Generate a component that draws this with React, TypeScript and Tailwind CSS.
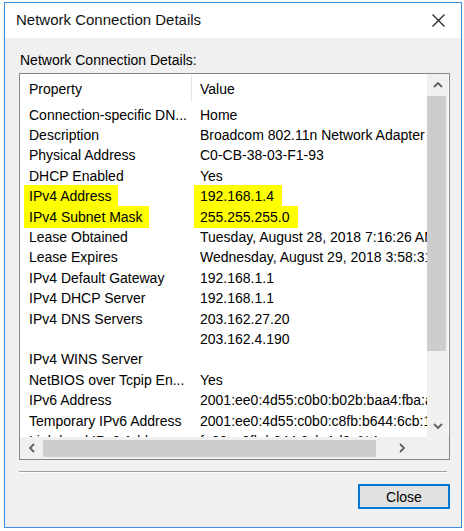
import React from "react";

const rows: { prop: string; value: string; mark?: boolean }[] = [
  { prop: "Connection-specific DN...", value: "Home" },
  { prop: "Description", value: "Broadcom 802.11n Network Adapter" },
  { prop: "Physical Address", value: "C0-CB-38-03-F1-93" },
  { prop: "DHCP Enabled", value: "Yes" },
  { prop: "IPv4 Address", value: "192.168.1.4", mark: true },
  { prop: "IPv4 Subnet Mask", value: "255.255.255.0", mark: true },
  { prop: "Lease Obtained", value: "Tuesday, August 28, 2018 7:16:26 AM" },
  { prop: "Lease Expires", value: "Wednesday, August 29, 2018 3:58:31 AM" },
  { prop: "IPv4 Default Gateway", value: "192.168.1.1" },
  { prop: "IPv4 DHCP Server", value: "192.168.1.1" },
  { prop: "IPv4 DNS Servers", value: "203.162.27.20" },
  { prop: "", value: "203.162.4.190" },
  { prop: "IPv4 WINS Server", value: "" },
  { prop: "NetBIOS over Tcpip En...", value: "Yes" },
  { prop: "IPv6 Address", value: "2001:ee0:4d55:c0b0:b02b:baa4:fba:a1c3" },
  { prop: "Temporary IPv6 Address", value: "2001:ee0:4d55:c0b0:c8fb:b644:6cb:1d3a" },
  { prop: "Link-local IPv6 Address", value: "fe80::c8fb:b644:6cb:1d3a%4" },
];

const Chevron = ({ dir }: { dir: "up" | "down" | "left" | "right" }) => {
  const d = {
    up: "M1 6 L5 2 L9 6",
    down: "M1 2 L5 6 L9 2",
    left: "M6 1 L2 5 L6 9",
    right: "M2 1 L6 5 L2 9",
  }[dir];
  const horiz = dir === "left" || dir === "right";
  return (
    <svg width={horiz ? 8 : 10} height={horiz ? 10 : 8} viewBox={horiz ? "0 0 8 10" : "0 0 10 8"}>
      <path d={d} fill="none" stroke="#606060" strokeWidth="1.8" />
    </svg>
  );
};

export default function App() {
  return (
    <div
      className="w-[464px] h-[531px] bg-white pt-[2px] pl-[4px] overflow-hidden text-black"
      style={{ fontFamily: '"Liberation Sans", Arial, sans-serif' }}
    >
      <div className="w-[458px] h-[526px] border border-[#3a8ee0] flex flex-col">
        {/* title bar */}
        <div className="h-[35px] bg-white flex items-center justify-between pl-[11px] pr-[16px] shrink-0">
          <span className="text-[15px] text-[#111]">Network Connection Details</span>
          <svg width="13" height="13" viewBox="0 0 13 13">
            <path d="M0.5 0.5 L12.5 12.5 M12.5 0.5 L0.5 12.5" stroke="#222" strokeWidth="1.2" />
          </svg>
        </div>

        {/* body */}
        <div className="flex-1 bg-[#f0f0f0] pt-[12px] pl-[14px] flex flex-col">
          <div className="h-[20px] leading-[20px] text-[14px] pl-[1px]">Network Connection Details:</div>

          <div className="mt-[3px] w-[431px] h-[387px] border border-[#828790] bg-white flex flex-col">
            <div className="flex h-[363px]">
              <div className="w-[407px] overflow-hidden flex flex-col text-[14px]">
                {/* header */}
                <div className="h-[31px] shrink-0 flex items-center relative">
                  <span className="pl-[9px] w-[171px]">Property</span>
                  <span className="pl-[9px]">Value</span>
                  <div className="absolute left-[171px] top-[1px] h-[27px] w-px bg-[#e5e5e5]" />
                </div>
                {rows.map((r, i) => (
                  <div key={i} className="h-[20.4px] shrink-0 flex items-center whitespace-nowrap">
                    <span className="w-[180px] shrink-0 pl-[9px]">
                      {r.mark ? (
                        <span className="bg-[#ffff00] -ml-[5px] pl-[5px] pr-[6px] py-[3px]">{r.prop}</span>
                      ) : (
                        r.prop
                      )}
                    </span>
                    <span>
                      {r.mark ? (
                        <span className="bg-[#ffff00] -ml-[6px] pl-[6px] pr-[8px] py-[3px]">{r.value}</span>
                      ) : (
                        r.value
                      )}
                    </span>
                  </div>
                ))}
              </div>
              {/* vertical scrollbar */}
              <div className="w-[21px] bg-[#f0f0f0] flex flex-col">
                <div className="h-[22px] flex items-center justify-center">
                  <Chevron dir="up" />
                </div>
                <div className="h-[255px] w-[19px] bg-[#cdcdcd]" />
                <div className="flex-1" />
                <div className="h-[22px] flex items-center justify-center">
                  <Chevron dir="down" />
                </div>
              </div>
            </div>
            {/* horizontal scrollbar */}
            <div className="flex h-[22px]">
              <div className="w-[407px] bg-[#f0f0f0] flex items-center">
                <div className="w-[23px] flex justify-center">
                  <Chevron dir="left" />
                </div>
                <div className="w-[333px] h-[17px] bg-[#cdcdcd]" />
                <div className="flex-1 flex justify-center">
                  <Chevron dir="right" />
                </div>
              </div>
              <div className="flex-1 bg-[#f0f0f0]" />
            </div>
          </div>

          <div className="mt-[11px] w-[428px] border-t border-[#a0a0a0] border-b border-b-white" />

          <div className="mt-[11px] w-[431px] flex justify-end">
            <button className="w-[92px] h-[25px] border-2 border-[#0078d7] bg-[#e1e1e1] text-[14px] leading-none">
              Close
            </button>
          </div>
        </div>
      </div>
    </div>
  );
}
